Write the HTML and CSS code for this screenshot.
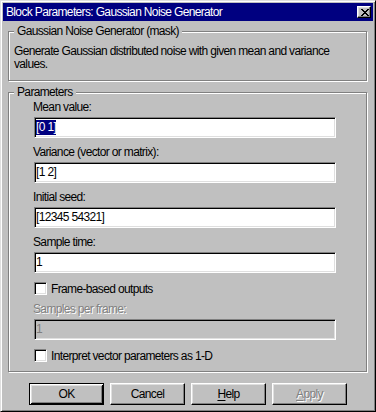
FILE: index.html
```html
<!DOCTYPE html>
<html>
<head>
<meta charset="utf-8">
<link rel="stylesheet" href="styles.css">
</head>
<body>
<div class="window">
  <div class="titlebar">
    <span class="title">Block Parameters: Gaussian Noise Generator</span>
    <span class="close">
      <svg width="8" height="7" viewBox="0 0 8 7"><path fill="#000" d="M0 0h2v1h-2zM6 0h2v1h-2zM1 1h2v1h-2zM5 1h2v1h-2zM2 2h4v1h-4zM3 3h2v1h-2zM2 4h4v1h-4zM1 5h2v1h-2zM5 5h2v1h-2zM0 6h2v1h-2zM6 6h2v1h-2z"/></svg>
    </span>
  </div>
  <div class="content">
    <fieldset class="group mask">
      <legend>Gaussian Noise Generator (mask)</legend>
      <p class="desc">Generate Gaussian distributed noise with given mean and variance values.</p>
    </fieldset>
    <fieldset class="group params">
      <legend>Parameters</legend>
      <div class="fields">
        <div class="field">
          <div class="label">Mean value:</div>
          <div class="input"><span class="sel">[0 1]</span></div>
        </div>
        <div class="field">
          <div class="label">Variance (vector or matrix):</div>
          <div class="input"><span class="val">[1 2]</span></div>
        </div>
        <div class="field">
          <div class="label">Initial seed:</div>
          <div class="input"><span class="val">[12345 54321]</span></div>
        </div>
        <div class="field">
          <div class="label">Sample time:</div>
          <div class="input"><span class="val">1</span></div>
        </div>
        <div class="check">
          <span class="box"></span>
          <span class="check-label">Frame-based outputs</span>
        </div>
        <div class="field disabled">
          <div class="label">Samples per frame:</div>
          <div class="input"><span class="val">1</span></div>
        </div>
        <div class="check">
          <span class="box"></span>
          <span class="check-label">Interpret vector parameters as 1-D</span>
        </div>
      </div>
    </fieldset>
    <div class="buttons">
      <div class="btn default">OK</div>
      <div class="btn">Cancel</div>
      <div class="btn"><u>H</u>elp</div>
      <div class="btn disabled"><u>A</u>pply</div>
    </div>
  </div>
</div>
</body>
</html>
```

FILE: styles.css
```css
* {
  box-sizing: border-box;
}

html,
body {
  margin: 0;
  padding: 0;
  background: #c0c0c0;
}

body {
  font-family: "Liberation Sans", Arial, sans-serif;
  font-size: 12px;
  letter-spacing: -0.65px;
  color: #000;
}

.window {
  width: 376px;
  height: 412px;
  border: 1px solid;
  border-color: #dfdfdf #000 #000 #dfdfdf;
  box-shadow: inset 1px 1px 0 #fff, inset -1px -1px 0 #808080;
  padding: 2px;
  background: #c0c0c0;
  display: flex;
  flex-direction: column;
}

.titlebar {
  flex: none;
  height: 18px;
  background: #000080;
  color: #fff;
  display: flex;
  align-items: center;
  justify-content: space-between;
  padding: 0 2px 0 3px;
  line-height: 16px;
}

.close {
  width: 14px;
  height: 12px;
  background: #c0c0c0;
  border: 1px solid;
  border-color: #fff #000 #000 #fff;
  box-shadow: inset -1px -1px 0 #808080, inset 1px 1px 0 #dfdfdf;
  display: flex;
  align-items: center;
  justify-content: center;
  padding-left: 1px;
}

.close svg {
  display: block;
}

.content {
  flex: 1;
  display: flex;
  flex-direction: column;
  padding: 0 6px 0 5px;
}

.group {
  margin: 0;
  padding: 0 5px;
  border: 1px solid #808080;
  box-shadow: 1px 1px 0 #fff, inset 1px 1px 0 #fff;
  min-inline-size: 0;
}

.group legend {
  padding: 0 3px;
  line-height: 15px;
  background: #c0c0c0;
}

.mask {
  margin-top: 3px;
  padding-top: 6px;
  padding-bottom: 9px;
}

.desc {
  margin: 0;
  line-height: 13px;
}

.params {
  margin-top: 4px;
  padding-bottom: 9px;
}

.fields {
  display: flex;
  flex-direction: column;
  padding-left: 19px;
}

.field {
  display: flex;
  flex-direction: column;
  gap: 2px;
  margin-bottom: 7px;
}

.label {
  line-height: 15px;
}

.input {
  width: 302px;
  height: 21px;
  margin-left: 1px;
  background: #fff;
  border: 1px solid;
  border-color: #808080 #fff #fff #808080;
  box-shadow: inset 1px 1px 0 #000, inset -1px -1px 0 #dfdfdf;
  display: flex;
  align-items: center;
  padding: 0 1px;
  line-height: 15px;
}

.sel {
  background: #000080;
  color: #fff;
}

.field.disabled .label {
  color: #808080;
  text-shadow: 1px 1px 0 #fff;
}

.field.disabled .input {
  background: #c0c0c0;
  color: #808080;
}

.check {
  display: flex;
  align-items: center;
  gap: 4px;
  height: 13px;
  margin: 2px 0 7px 1px;
}

.check:last-child {
  margin-bottom: 0;
}

.box {
  width: 13px;
  height: 13px;
  background: #fff;
  border: 1px solid;
  border-color: #808080 #fff #fff #808080;
  box-shadow: inset 1px 1px 0 #000, inset -1px -1px 0 #dfdfdf;
}

.buttons {
  display: flex;
  gap: 6px;
  margin: 11px 0 0 21px;
}

.btn {
  width: 75px;
  height: 22px;
  border: 1px solid;
  border-color: #fff #000 #000 #fff;
  box-shadow: inset -1px -1px 0 #808080, inset 1px 1px 0 #dfdfdf;
  display: flex;
  align-items: center;
  justify-content: center;
  line-height: 15px;
}

.btn u {
  text-decoration: underline;
  text-underline-offset: 2px;
}

.btn.default {
  border-color: #000;
  box-shadow: inset 1px 1px 0 #fff, inset -1px -1px 0 #000, inset 2px 2px 0 #dfdfdf, inset -2px -2px 0 #808080;
}

.btn.disabled {
  color: #808080;
  text-shadow: 1px 1px 0 #fff;
}
```
